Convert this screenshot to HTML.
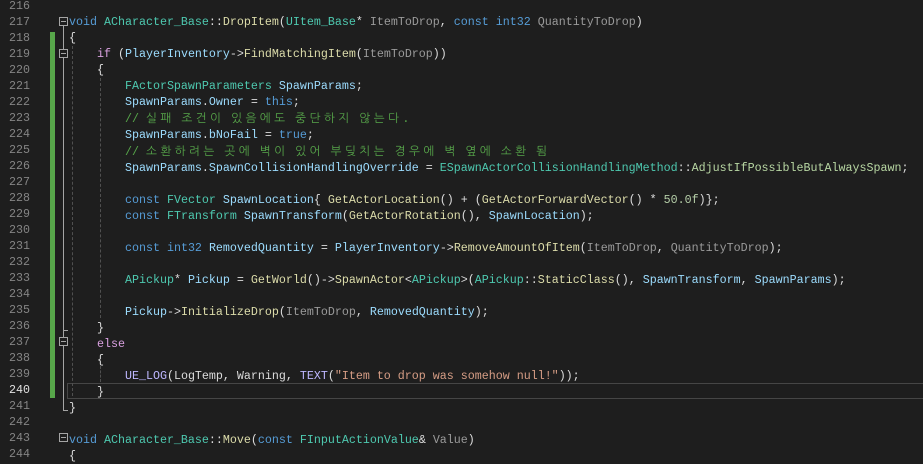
<!DOCTYPE html>
<html><head><meta charset="utf-8"><style>
body{margin:0;width:923px;height:453px;background:#1e1e1e;overflow:hidden;position:relative;font-family:"Liberation Mono","NanumGothic",monospace;}
.ln{position:absolute;left:0;width:30px;text-align:right;color:#858585;font-size:11.67px;line-height:16px;top:-2px;white-space:pre;}
pre{position:absolute;left:69px;top:-2px;margin:0;font-family:"Liberation Mono",monospace;font-size:11.67px;line-height:16px;color:#dcdcdc;white-space:pre;}
.k{color:#569cd6}.t{color:#4ec9b0}.f{color:#dcdcaa}.v{color:#9cdcfe}.c{color:#57a64a}.m{color:#beb7ff}.cf{color:#d8a0df}.s{color:#d69d85}.p{color:#b4b4b4}.n{color:#b5cea8}.pa{color:#9a9a9a}.e{color:#b8d7a3}
.h{font-family:"NanumGothic","Noto Sans CJK KR",sans-serif;letter-spacing:3.4px}
.bar{position:absolute;left:50px;top:32px;width:5px;height:366px;background:#57a64a}
.fold{position:absolute;left:63px;width:1px;background:#a5a5a5}
.box{position:absolute;left:59px;width:7px;height:7px;border:1px solid #a5a5a5;background:#1e1e1e}
.box:after{content:"";position:absolute;left:1px;top:3px;width:5px;height:1px;background:#a5a5a5}
.g{position:absolute;width:0;border-left:1px dashed #505050}
.cur{position:absolute;left:67px;top:383px;width:860px;height:14px;border:1px solid #464646}
</style></head><body>
<div class="bar"></div>
<div class="cur"></div>
<div class="fold" style="top:26px;height:385px"></div>
<div class="fold" style="top:410px;width:5px;height:1px"></div>
<div class="fold" style="left:63px;top:330px;width:5px;height:1px"></div>
<div class="box" style="top:17px"></div>
<div class="box" style="top:49px"></div>
<div class="box" style="top:337px"></div>
<div class="box" style="top:433px"></div>
<div class="g" style="left:72px;top:46px;height:350px"></div>
<div class="g" style="left:100px;top:78px;height:240px"></div>
<div class="g" style="left:100px;top:366px;height:16px"></div>
<div class="ln">216
217
218
219
220
221
222
223
224
225
226
227
228
229
230
231
232
233
234
235
236
237
238
239
<span style="color:#e0e0e0">240</span>
241
242
243
244</div>
<pre>

<span class="k">void</span> <span class="t">ACharacter_Base</span>::<span class="f">DropItem</span>(<span class="t">UItem_Base</span>* <span class="pa">ItemToDrop</span>, <span class="k">const</span> <span class="k">int32</span> <span class="pa">QuantityToDrop</span>)
{
    <span class="cf">if</span> (<span class="v">PlayerInventory</span>-&gt;<span class="f">FindMatchingItem</span>(<span class="pa">ItemToDrop</span>))
    {
        <span class="t">FActorSpawnParameters</span> <span class="v">SpawnParams</span>;
        <span class="v">SpawnParams</span>.<span class="v">Owner</span> = <span class="k">this</span>;
        <span class="c">// <span class="h">실패 조건이 있음에도 중단하지 않는다</span>.</span>
        <span class="v">SpawnParams</span>.<span class="v">bNoFail</span> = <span class="k">true</span>;
        <span class="c">// <span class="h">소환하려는 곳에 벽이 있어 부딪치는 경우에 벽 옆에 소환 됨</span></span>
        <span class="v">SpawnParams</span>.<span class="v">SpawnCollisionHandlingOverride</span> = <span class="t">ESpawnActorCollisionHandlingMethod</span>::<span class="e">AdjustIfPossibleButAlwaysSpawn</span>;

        <span class="k">const</span> <span class="t">FVector</span> <span class="v">SpawnLocation</span>{ <span class="f">GetActorLocation</span>() + (<span class="f">GetActorForwardVector</span>() * <span class="n">50.0f</span>)};
        <span class="k">const</span> <span class="t">FTransform</span> <span class="v">SpawnTransform</span>(<span class="f">GetActorRotation</span>(), <span class="v">SpawnLocation</span>);

        <span class="k">const</span> <span class="k">int32</span> <span class="v">RemovedQuantity</span> = <span class="v">PlayerInventory</span>-&gt;<span class="f">RemoveAmountOfItem</span>(<span class="pa">ItemToDrop</span>, <span class="pa">QuantityToDrop</span>);

        <span class="t">APickup</span>* <span class="v">Pickup</span> = <span class="f">GetWorld</span>()-&gt;<span class="f">SpawnActor</span>&lt;<span class="t">APickup</span>&gt;(<span class="t">APickup</span>::<span class="f">StaticClass</span>(), <span class="v">SpawnTransform</span>, <span class="v">SpawnParams</span>);

        <span class="v">Pickup</span>-&gt;<span class="f">InitializeDrop</span>(<span class="pa">ItemToDrop</span>, <span class="v">RemovedQuantity</span>);
    }
    <span class="cf">else</span>
    {
        <span class="m">UE_LOG</span>(LogTemp, Warning, <span class="m">TEXT</span>(<span class="s">"Item to drop was somehow null!"</span>));
    }
}

<span class="k">void</span> <span class="t">ACharacter_Base</span>::<span class="f">Move</span>(<span class="k">const</span> <span class="t">FInputActionValue</span>&amp; <span class="pa">Value</span>)
{
</pre>
</body></html>
